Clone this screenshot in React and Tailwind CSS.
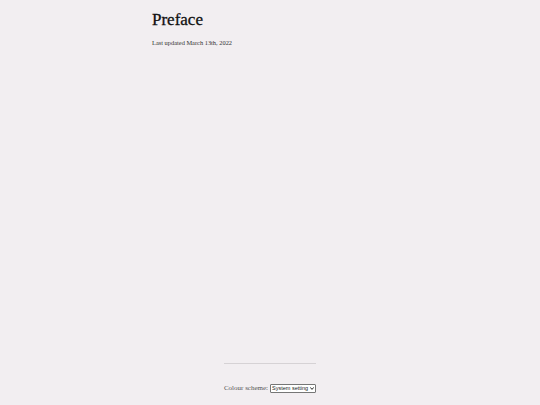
export default function App() {
  return (
    <div className="min-h-[405px] bg-[#f2eef1] text-[#222] flex flex-col" style={{ fontFamily: '"Liberation Serif", "DejaVu Serif", serif' }}>
      <main className="w-[236px] mx-auto pt-[9px] flex-1">
        <h1 className="text-[17px] leading-[22px] text-[#111] [-webkit-text-stroke:0.3px_#111]">Preface</h1>
        <p className="mt-[7px] text-[6.4px] leading-[9px] text-[#333]">Last updated March 13th, 2022</p>
      </main>
      <footer className="w-[92px] mx-auto mb-[12px] flex flex-col items-center">
        <hr className="w-full border-t border-[#d6d2d5]" />
        <div className="mt-[19px] h-[10px] flex items-center gap-[2px] whitespace-nowrap leading-none">
          <span className="text-[7px] leading-[10px] text-[#555]">Colour scheme:</span>
          <div className="relative flex h-[9px] leading-none text-[5.5px]">
            <select className="appearance-none text-[5.5px] leading-[7px] border border-[#767676] bg-white rounded-[1px] h-[9px] py-0 pl-[1px] pr-[6px] w-[46px]" style={{ fontFamily: '"Liberation Sans", sans-serif' }} defaultValue="system">
              <option value="system">System setting</option>
            </select>
            <svg className="absolute right-[2px] top-[3px] pointer-events-none" width="4" height="3" viewBox="0 0 4 3">
              <path d="M0.3 0.4 L2 2.4 L3.7 0.4" fill="none" stroke="#111" strokeWidth="0.9" />
            </svg>
          </div>
        </div>
      </footer>
    </div>
  );
}
